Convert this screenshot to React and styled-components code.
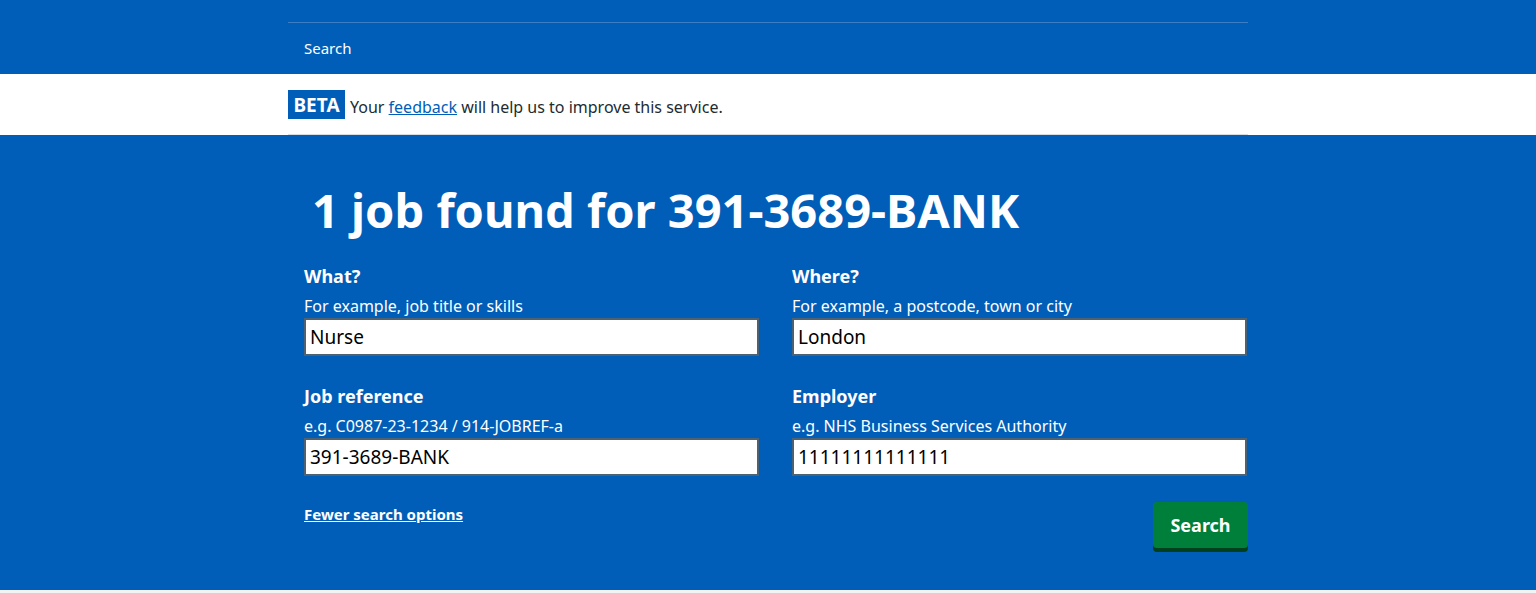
import React from 'react';
import styled, { createGlobalStyle } from 'styled-components';

const GlobalStyle = createGlobalStyle`
	html, body {
		margin: 0;
		padding: 0;
		background: #f0f4f5;
		font-family: "Noto Sans", "Open Sans", Arial, sans-serif;
		color: #212b32;
	}
`;

const Header = styled.header`
	background: #005eb8;
	padding-top: 22px;
`;

const Container = styled.div`
	width: 960px;
	margin: 0 auto;
`;

const Nav = styled.nav`
	border-top: 1px solid #3b7ec4;
	height: 52px;
	display: flex;
	align-items: center;
	padding-left: 16px;
	padding-bottom: 2px;
	box-sizing: border-box;
	a {
		color: #fff;
		text-decoration: none;
		font-size: 15px;
	}
`;

const Banner = styled.div`
	background: #fff;
`;

const BannerInner = styled(Container)`
	height: 60px;
	display: flex;
	align-items: center;
	gap: 5px;
	border-bottom: 1px solid #d8dde0;
	font-size: 16px;
	a {
		color: #005eb8;
		text-decoration: underline;
	}
`;

const BannerText = styled.span`
	margin-top: 5px;
`;

const Tag = styled.span`
	background: #005eb8;
	color: #fff;
	font-weight: 700;
	font-size: 19px;
	height: 29px;
	width: 57px;
	display: flex;
	align-items: center;
	justify-content: center;
	margin-top: 1px;
`;

const Main = styled.main`
	background: #005eb8;
	color: #fff;
	padding: 47px 0 42px;
`;

const Heading = styled.h1`
	margin: 0 0 25px;
	padding-left: 24px;
	font-size: 47px;
	line-height: 56px;
	font-weight: 700;
`;

const FieldGrid = styled.div`
	display: grid;
	grid-template-columns: 455px 455px;
	column-gap: 33px;
	row-gap: 27px;
	padding-left: 16px;
`;

const Field = styled.div`
	display: flex;
	flex-direction: column;
`;

const Label = styled.label`
	font-weight: 700;
	font-size: 18px;
	line-height: 26px;
	margin-bottom: 5px;
`;

const Hint = styled.span`
	font-size: 16px;
	line-height: 24px;
`;

const Input = styled.input`
	box-sizing: border-box;
	height: 38px;
	width: 100%;
	border: 2px solid #4c6272;
	border-radius: 0;
	padding: 0 4px;
	font-family: inherit;
	font-size: 19px;
	color: #000;
	background: #fff;
	outline: none;
`;

const Actions = styled.div`
	display: flex;
	justify-content: space-between;
	align-items: flex-start;
	padding-left: 16px;
	margin-top: 26px;
`;

const ToggleLink = styled.a`
	color: #fff;
	font-weight: 700;
	font-size: 15px;
	line-height: 24px;
	text-decoration: underline;
`;

const Button = styled.button`
	background: #007f3b;
	color: #fff;
	border: 0;
	border-radius: 4px;
	box-shadow: 0 4px 0 #00401e;
	font-family: inherit;
	font-weight: 700;
	font-size: 18px;
	height: 46px;
	width: 95px;
	padding: 0;
	cursor: pointer;
`;

const fields = [
	{ label: 'What?', hint: 'For example, job title or skills', value: 'Nurse' },
	{ label: 'Where?', hint: 'For example, a postcode, town or city', value: 'London' },
	{ label: 'Job reference', hint: 'e.g. C0987-23-1234 / 914-JOBREF-a', value: '391-3689-BANK' },
	{ label: 'Employer', hint: 'e.g. NHS Business Services Authority', value: '11111111111111' },
];

export default function App() {
	return (
		<>
			<GlobalStyle />
			<Header>
				<Container>
					<Nav>
						<a href='#'>Search</a>
					</Nav>
				</Container>
			</Header>
			<Banner>
				<BannerInner>
					<Tag>BETA</Tag>
					<BannerText>
						Your <a href='#'>feedback</a> will help us to improve this service.
					</BannerText>
				</BannerInner>
			</Banner>
			<Main>
				<Container>
					<Heading>1 job found for 391-3689-BANK</Heading>
					<FieldGrid>
						{fields.map((f) => (
							<Field key={f.label}>
								<Label>{f.label}</Label>
								<Hint>{f.hint}</Hint>
								<Input defaultValue={f.value} />
							</Field>
						))}
					</FieldGrid>
					<Actions>
						<ToggleLink href='#'>Fewer search options</ToggleLink>
						<Button>Search</Button>
					</Actions>
				</Container>
			</Main>
		</>
	);
}
